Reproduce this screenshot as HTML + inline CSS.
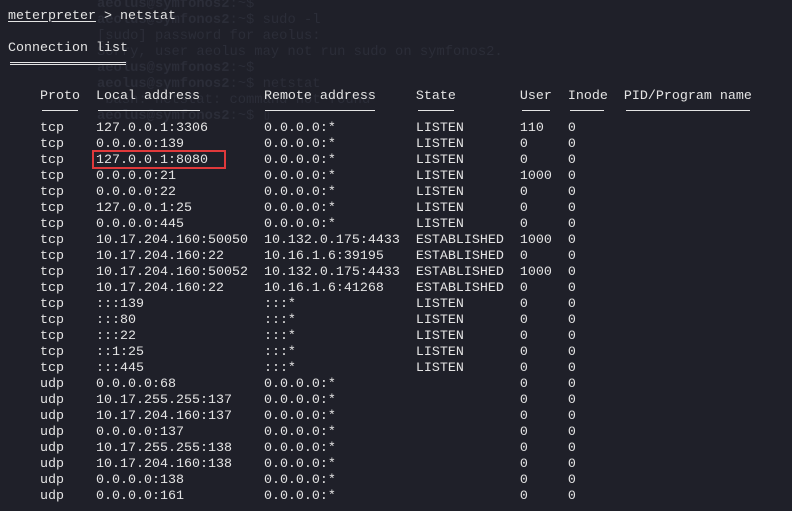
<!DOCTYPE html>
<html><head><meta charset="utf-8"><style>
html,body{margin:0;padding:0;background:#1f2029;width:792px;height:511px;overflow:hidden}
.t{position:absolute;left:8px;top:9px;margin:0;font-family:"Liberation Mono",monospace;font-size:13.33px;line-height:16px;color:#e4e4e4;white-space:pre}
.g{position:absolute;left:97px;top:-3px;margin:0;font-family:"Liberation Mono",monospace;font-size:13.8px;line-height:16px;color:#2b2d38;white-space:pre}
.g b{font-weight:bold}
u{text-decoration:underline;text-underline-offset:2px}
.l{position:absolute;top:110px;height:0;border-top:1px solid #e4e4e4}
.dd{position:absolute;left:10px;top:62px;width:116px;height:1px;border-top:1px solid #e4e4e4;border-bottom:1px solid #e4e4e4}
.box{position:absolute;left:92px;top:150px;width:130px;height:15px;border:2px solid #e0393b}
</style></head><body>
<pre class="g"><b>aeolus@symfonos2</b>:~$
<b>aeolus@symfonos2</b>:~$ sudo -l
[sudo] password for aeolus:
Sorry, user aeolus may not run sudo on symfonos2.
<b>aeolus@symfonos2</b>:~$
<b>aeolus@symfonos2</b>:~$ netstat
-bash: netstat: command not found
<b>aeolus@symfonos2</b>:~$ ▯</pre>
<pre class="t"><u>meterpreter</u> &gt; netstat

Connection list


    Proto  Local address        Remote address     State        User  Inode  PID/Program name

    tcp    127.0.0.1:3306       0.0.0.0:*          LISTEN       110   0
    tcp    0.0.0.0:139          0.0.0.0:*          LISTEN       0     0
    tcp    127.0.0.1:8080       0.0.0.0:*          LISTEN       0     0
    tcp    0.0.0.0:21           0.0.0.0:*          LISTEN       1000  0
    tcp    0.0.0.0:22           0.0.0.0:*          LISTEN       0     0
    tcp    127.0.0.1:25         0.0.0.0:*          LISTEN       0     0
    tcp    0.0.0.0:445          0.0.0.0:*          LISTEN       0     0
    tcp    10.17.204.160:50050  10.132.0.175:4433  ESTABLISHED  1000  0
    tcp    10.17.204.160:22     10.16.1.6:39195    ESTABLISHED  0     0
    tcp    10.17.204.160:50052  10.132.0.175:4433  ESTABLISHED  1000  0
    tcp    10.17.204.160:22     10.16.1.6:41268    ESTABLISHED  0     0
    tcp    :::139               :::*               LISTEN       0     0
    tcp    :::80                :::*               LISTEN       0     0
    tcp    :::22                :::*               LISTEN       0     0
    tcp    ::1:25               :::*               LISTEN       0     0
    tcp    :::445               :::*               LISTEN       0     0
    udp    0.0.0.0:68           0.0.0.0:*                       0     0
    udp    10.17.255.255:137    0.0.0.0:*                       0     0
    udp    10.17.204.160:137    0.0.0.0:*                       0     0
    udp    0.0.0.0:137          0.0.0.0:*                       0     0
    udp    10.17.255.255:138    0.0.0.0:*                       0     0
    udp    10.17.204.160:138    0.0.0.0:*                       0     0
    udp    0.0.0.0:138          0.0.0.0:*                       0     0
    udp    0.0.0.0:161          0.0.0.0:*                       0     0</pre>
<div class="dd"></div>
<div class="l" style="left:42px;width:36px"></div>
<div class="l" style="left:98px;width:102px"></div>
<div class="l" style="left:265px;width:110px"></div>
<div class="l" style="left:418px;width:36px"></div>
<div class="l" style="left:522px;width:28px"></div>
<div class="l" style="left:570px;width:34px"></div>
<div class="l" style="left:626px;width:124px"></div>
<div class="box"></div>
</body></html>
